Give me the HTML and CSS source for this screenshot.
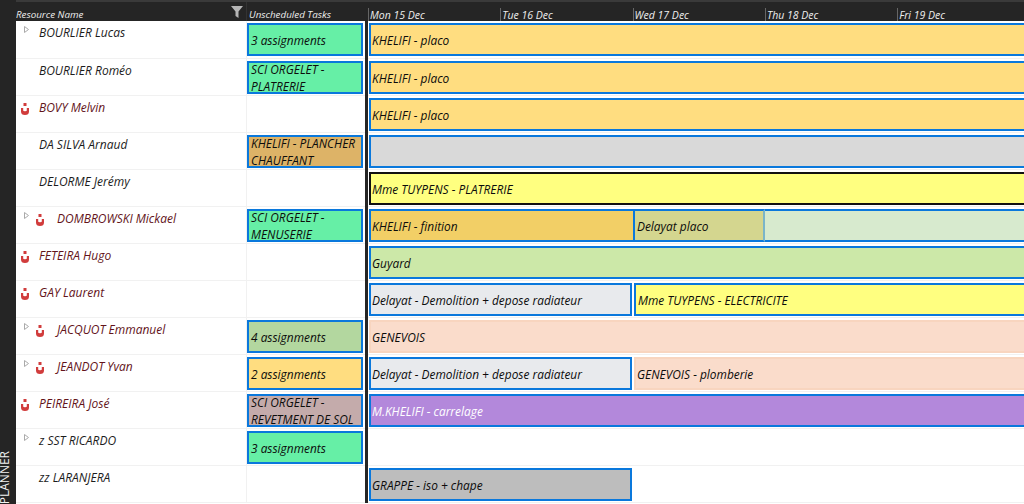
FILE: index.html
```html
<!DOCTYPE html>
<html lang="en">
<head>
<meta charset="utf-8">
<title>Planner</title>
<link rel="stylesheet" href="styles.css">
</head>
<body>
<svg class="defs" width="0" height="0" aria-hidden="true">
  <symbol id="warn" viewBox="0 0 8 12">
    <rect x="2.5" y="0" width="3" height="3" fill="#d13c3c"/>
    <path d="M0 5h2.2v2.5q0 .8 1.8.8t1.8-.8V5H8v3.5Q8 12 4 12T0 8.5z" fill="#d13c3c"/>
  </symbol>
  <symbol id="tri" viewBox="0 0 5 7">
    <path d="M.5.5 4.5 3.5.5 6.5z" fill="#fff" stroke="#aaa" stroke-width="1"/>
  </symbol>
</svg>
<div class="planner">
  <aside class="rail"><span class="rail-label">PLANNER</span></aside>
  <main class="board">
    <header class="head">
      <div class="head-name"><span>Resource Name</span>
        <svg class="funnel" viewBox="0 0 12 12"><path d="M0 0h12L7.5 5.5V12L4.5 10V5.5z" fill="#b5b5b5"/></svg>
      </div>
      <div class="head-tasks">Unscheduled Tasks</div>
      <div class="split"></div>
      <div class="head-days">
        <span class="day">Mon 15 Dec</span><span class="day">Tue 16 Dec</span><span class="day">Wed 17 Dec</span><span class="day">Thu 18 Dec</span><span class="day">Fri 19 Dec</span>
      </div>
    </header>

    <section class="row row-first">
      <div class="name"><span class="lead"><svg class="tri"><use href="#tri"/></svg></span><span>BOURLIER Lucas</span></div>
      <div class="tasks"><div class="bar green">3 assignments</div></div>
      <div class="split"></div>
      <div class="line"><div class="bar sand wide">KHELIFI - placo</div></div>
    </section>
    <section class="row">
      <div class="name"><span class="lead"></span><span>BOURLIER Roméo</span></div>
      <div class="tasks"><div class="bar green">SCI ORGELET - PLATRERIE</div></div>
      <div class="split"></div>
      <div class="line"><div class="bar sand wide">KHELIFI - placo</div></div>
    </section>
    <section class="row">
      <div class="name alert"><span class="lead"><svg class="warn"><use href="#warn"/></svg></span><span>BOVY Melvin</span></div>
      <div class="tasks"></div>
      <div class="split"></div>
      <div class="line"><div class="bar sand wide">KHELIFI - placo</div></div>
    </section>
    <section class="row">
      <div class="name"><span class="lead"></span><span>DA SILVA Arnaud</span></div>
      <div class="tasks"><div class="bar tan">KHELIFI - PLANCHER CHAUFFANT</div></div>
      <div class="split"></div>
      <div class="line"><div class="bar silver wide"></div></div>
    </section>
    <section class="row">
      <div class="name"><span class="lead"></span><span>DELORME Jerémy</span></div>
      <div class="tasks"></div>
      <div class="split"></div>
      <div class="line"><div class="bar lemon black wide">Mme TUYPENS - PLATRERIE</div></div>
    </section>
    <section class="row">
      <div class="name alert"><span class="lead lead-deep"><svg class="tri"><use href="#tri"/></svg><svg class="warn"><use href="#warn"/></svg></span><span>DOMBROWSKI Mickael</span></div>
      <div class="tasks"><div class="bar green">SCI ORGELET - MENUSERIE</div></div>
      <div class="split"></div>
      <div class="line">
        <div class="bar amber under" style="width:266px">KHELIFI - finition</div>
        <div class="bar olive" style="width:132px">Delayat placo</div>
        <div class="bar pale wide">&nbsp;</div>
      </div>
    </section>
    <section class="row">
      <div class="name alert"><span class="lead"><svg class="warn"><use href="#warn"/></svg></span><span>FETEIRA Hugo</span></div>
      <div class="tasks"></div>
      <div class="split"></div>
      <div class="line"><div class="bar lime wide">Guyard</div></div>
    </section>
    <section class="row">
      <div class="name alert"><span class="lead"><svg class="warn"><use href="#warn"/></svg></span><span>GAY Laurent</span></div>
      <div class="tasks"></div>
      <div class="split"></div>
      <div class="line">
        <div class="bar mist" style="width:263px">Delayat - Demolition + depose radiateur</div>
        <div class="bar lemon wide">Mme TUYPENS - ELECTRICITE</div>
      </div>
    </section>
    <section class="row">
      <div class="name alert"><span class="lead lead-deep"><svg class="tri"><use href="#tri"/></svg><svg class="warn"><use href="#warn"/></svg></span><span>JACQUOT Emmanuel</span></div>
      <div class="tasks"><div class="bar sage">4 assignments</div></div>
      <div class="split"></div>
      <div class="line"><div class="bar peach wide">GENEVOIS</div></div>
    </section>
    <section class="row">
      <div class="name alert"><span class="lead lead-deep"><svg class="tri"><use href="#tri"/></svg><svg class="warn"><use href="#warn"/></svg></span><span>JEANDOT Yvan</span></div>
      <div class="tasks"><div class="bar sand">2 assignments</div></div>
      <div class="split"></div>
      <div class="line">
        <div class="bar mist" style="width:263px">Delayat - Demolition + depose radiateur</div>
        <div class="bar peach wide">GENEVOIS - plomberie</div>
      </div>
    </section>
    <section class="row">
      <div class="name alert"><span class="lead"><svg class="warn"><use href="#warn"/></svg></span><span>PEIREIRA José</span></div>
      <div class="tasks"><div class="bar mauve">SCI ORGELET - REVETMENT DE SOL</div></div>
      <div class="split"></div>
      <div class="line"><div class="bar purple wide">M.KHELIFI - carrelage</div></div>
    </section>
    <section class="row">
      <div class="name"><span class="lead"><svg class="tri"><use href="#tri"/></svg></span><span>z SST RICARDO</span></div>
      <div class="tasks"><div class="bar green">3 assignments</div></div>
      <div class="split"></div>
      <div class="line"></div>
    </section>
    <section class="row">
      <div class="name"><span class="lead"></span><span>zz LARANJERA</span></div>
      <div class="tasks"></div>
      <div class="split"></div>
      <div class="line"><div class="bar grey" style="width:263px">GRAPPE - iso + chape</div></div>
    </section>
  </main>
</div>
</body>
</html>
```
FILE: styles.css
```css
* { box-sizing: border-box; }
html, body { margin: 0; height: 100%; overflow: hidden; background: #252525; }
.defs { position: absolute; }
.planner {
  display: flex;
  height: 504px;
  font-family: "Open Sans", "Noto Sans", sans-serif;
  font-style: italic;
  font-size: 11.9px;
  color: #111;
}
.rail {
  flex: none;
  width: 16px;
  background: #252525;
  display: flex;
  align-items: flex-end;
  overflow: hidden;
}
.rail-label {
  writing-mode: vertical-rl;
  transform: rotate(180deg);
  font-style: normal;
  font-size: 12px;
  line-height: 10px;
  color: #f2f2f2;
}
.board { flex: 1; min-width: 0; overflow: hidden; background: #fff; }
.head, .row {
  display: grid;
  grid-template-columns: 231px 118px 3px 1fr;
}
.head {
  height: 21px;
  background: #252525;
  border-top: 2px solid #3a3a3a;
  color: #eee;
  font-size: 9.8px;
  line-height: 25px;
}
.head-name {
  display: flex;
  justify-content: space-between;
  align-items: flex-start;
  padding-right: 3px;
  border-right: 1px solid #333;
}
.funnel { width: 12px; height: 12px; margin-top: 3.5px; }
.head-tasks { padding-left: 2px; overflow: hidden; }
.head-days { display: flex; font-size: 10.5px; overflow: hidden; }
.day {
  flex: none;
  width: 132.3px;
  padding-left: 1px;
  border-left: 1px solid #666;
  height: 13px;
  margin-top: 6px;
  line-height: 15px;
}
.split { background: #252525; }
.row { height: 37px; }
.row-first { height: 38px; }
.name, .tasks, .line { border-bottom: 1px solid #f1f1f1; overflow: hidden; }
.name {
  display: flex;
  padding-left: 5px;
  font-size: 12px;
  line-height: 23px;
  border-right: 1px solid #f1f1f1;
  color: #1c1c1c;
}
.alert { color: #63141a; }
.lead { flex: none; width: 18px; display: flex; }
.lead-deep { width: 36px; }
.tri { flex: none; width: 5px; height: 7px; margin: 5px 0 0 3px; }
.lead-deep .tri { margin-right: 7px; }
.warn { flex: none; width: 8px; height: 12px; margin-top: 7px; }
.tasks { padding: 2px 2px 0 0; }
.line {
  display: flex;
  padding: 2px 0 0 1px;
  gap: 2px;
  overflow: hidden;
}
.bar {
  flex: none;
  height: 33px;
  border: 2px solid #0a78dc;
  padding: 1px 0 0 2px;
  line-height: 17px;
  display: flex;
  align-items: center;
  overflow: hidden;
  color: #0c0c0c;
}
.line > .bar:first-child { padding-left: 1px; }
.wide { width: 720px; }
.under { margin-right: -4px; }
.green { background: #66efa6; }
.sand { background: #ffdd80; }
.tan { background: #ddb367; }
.silver { background: #d9d9d9; }
.lemon { background: #ffff80; }
.black { border-color: #111; }
.amber { background: #f2cf66; }
.olive { background: #d4d68f; border-right-color: #7ab5c9; position: relative; margin-right: -2px; }
.pale { background: #d7eace; border-left: 0; }
.lime { background: #cce8a8; }
.mist { background: #e8eaed; }
.peach { background: #fadccb; border-color: #f8d5bf; padding-left: 1px; }
.sage { background: #b3d79f; }
.mauve { background: #c4abab; }
.purple { background: #b388db; color: #fff; }
.grey { background: #bdbdbd; }
```
